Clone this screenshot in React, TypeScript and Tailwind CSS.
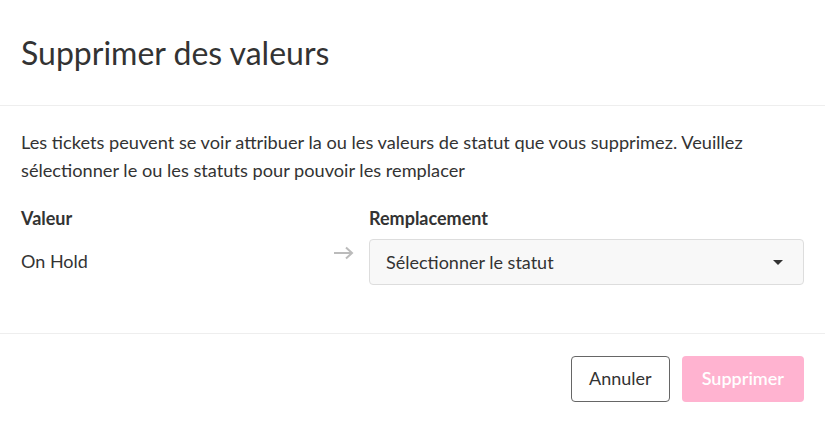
export default function App() {
  return (
    <div
      className="w-[825px] h-[423px] bg-white text-[#333] flex flex-col"
      style={{ fontFamily: '"Source Sans Pro", Lato, "Liberation Sans", sans-serif' }}
    >
      <div className="h-[106px] px-[21px] flex items-center border-b border-[#eeeeee]">
        <h1 className="text-[32px] leading-none">Supprimer des valeurs</h1>
      </div>
      <div className="px-[21px] pt-[22px] flex-1 border-b border-[#eeeeee]">
        <p className="text-[18.2px] leading-[28px] pr-[30px]">
          Les tickets peuvent se voir attribuer la ou les valeurs de statut que vous supprimez. Veuillez
          sélectionner le ou les statuts pour pouvoir les remplacer
        </p>
        <div className="mt-[20px] flex">
          <div className="w-[312px]">
            <div className="text-[18px] font-bold leading-[28px]">Valeur</div>
            <div className="text-[18px] leading-[28px] mt-[15px]">On Hold</div>
          </div>
          <div className="w-[36px] pt-[42px] text-[#bbbbbb]">
            <svg width="22" height="14" viewBox="0 0 22 14" fill="none" stroke="currentColor" strokeWidth="2">
              <path d="M1 7h18M13 1.5l6 5.5-6 5.5" />
            </svg>
          </div>
          <div className="flex-1">
            <div className="text-[18px] font-bold leading-[28px]">Remplacement</div>
            <button className="mt-[7px] w-full h-[46px] rounded-[4px] border border-[#dddddd] bg-[#f8f8f8] flex items-center justify-between pl-[16px] pr-[20px] text-[18px]">
              <span>Sélectionner le statut</span>
              <span className="w-0 h-0 border-l-[5px] border-r-[5px] border-t-[5px] border-l-transparent border-r-transparent border-t-[#333]" />
            </button>
          </div>
        </div>
      </div>
      <div className="h-[89px] px-[21px] flex items-center justify-end gap-[12px]">
        <button className="h-[46px] px-[17px] rounded-[4px] border border-[#666] text-[18px] text-[#333]">
          Annuler
        </button>
        <button className="h-[46px] px-[20px] rounded-[4px] bg-[#ffb3d0] text-white text-[18px] font-semibold">
          Supprimer
        </button>
      </div>
    </div>
  );
}
